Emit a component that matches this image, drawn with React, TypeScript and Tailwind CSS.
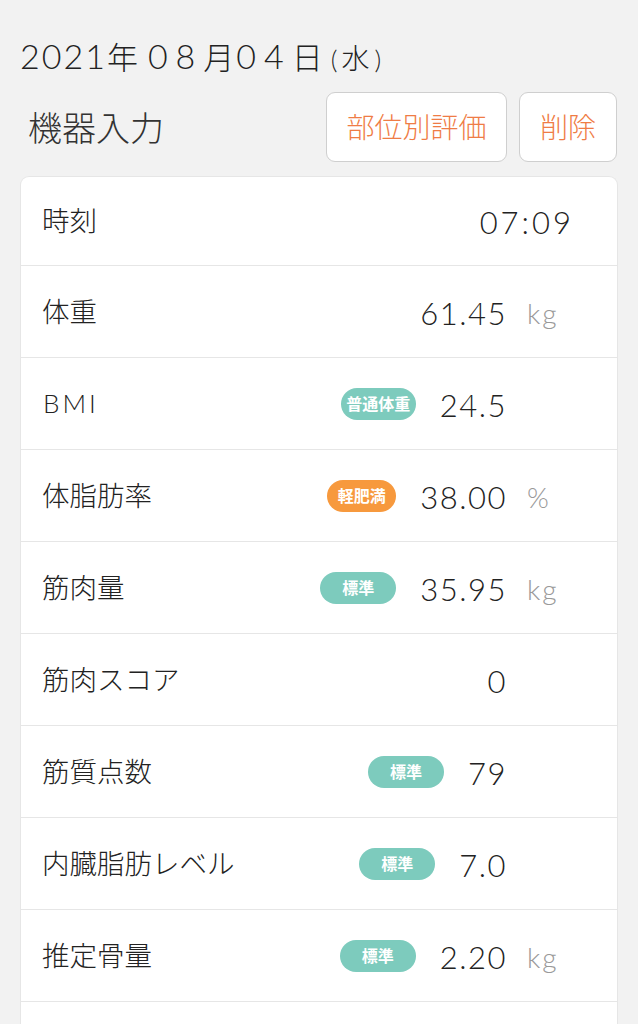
import React from 'react'

type Row = {
  label: string
  value: string
  unit?: string
  badge?: { text: string; color: string; width: string }
  latin?: boolean
}

const rows: Row[] = [
  { label: '体重', value: '61.45', unit: 'kg' },
  { label: 'BMI', value: '24.5', latin: true, badge: { text: '普通体重', color: 'bg-[#7dcbbd]', width: 'w-[75px]' } },
  { label: '体脂肪率', value: '38.00', unit: '%', badge: { text: '軽肥満', color: 'bg-[#f7993d]', width: 'w-[69px]' } },
  { label: '筋肉量', value: '35.95', unit: 'kg', badge: { text: '標準', color: 'bg-[#7dcbbd]', width: 'w-[76px]' } },
  { label: '筋肉スコア', value: '0' },
  { label: '筋質点数', value: '79', badge: { text: '標準', color: 'bg-[#7dcbbd]', width: 'w-[76px]' } },
  { label: '内臓脂肪レベル', value: '7.0', badge: { text: '標準', color: 'bg-[#7dcbbd]', width: 'w-[76px]' } },
  { label: '推定骨量', value: '2.20', unit: 'kg', badge: { text: '標準', color: 'bg-[#7dcbbd]', width: 'w-[76px]' } },
]

function MeasureRow({ row }: { row: Row }) {
  return (
    <div className="flex h-[92px] items-center border-t border-[#e6e6e6]">
      <div
        className={
          row.latin
            ? "pl-[22px] text-[26px] tracking-[3px] text-[#222] font-['Lato',sans-serif] font-light"
            : 'pl-[21px] text-[27.5px] font-light text-[#222]'
        }
      >
        {row.label}
      </div>
      <div className="ml-auto flex items-center">
        {row.badge && (
          <span
            className={`mr-[24px] flex h-[32px] ${row.badge.width} items-center justify-center rounded-full ${row.badge.color} text-[16px] font-bold text-white`}
          >
            {row.badge.text}
          </span>
        )}
        <span className="mt-[3px] text-[31px] font-light tracking-[1.5px] text-[#222]">{row.value}</span>
      </div>
      <div className="mt-[3px] w-[110px] pl-[20px] text-[28px] font-light tracking-[2px] text-[#999]">
        {row.unit}
      </div>
    </div>
  )
}

export default function App() {
  return (
    <div className="min-h-[1024px] bg-[#f2f2f2] font-['Lato','Noto_Sans_CJK_JP',sans-serif] text-[#222]">
      <div className="flex items-baseline pl-[20px] pt-[34px] leading-[44px]">
        <span className="text-[34px] font-light tracking-[2px]">2021</span>
        <span className="text-[31px] font-light">年</span>
        <span className="ml-[10px] text-[34px] font-light tracking-[8px]">08</span>
        <span className="text-[31px] font-light">月</span>
        <span className="ml-[2px] text-[34px] font-light tracking-[8px]">04</span>
        <span className="text-[31px] font-light">日</span>
        <span className="ml-[8px] text-[26px] font-light">(</span>
        <span className="ml-[4px] text-[28px] font-light">水</span>
        <span className="ml-[5px] text-[26px] font-light">)</span>
      </div>

      <div className="mt-[11px] flex items-center pl-[28px] pr-[21px]">
        <div className="text-[34px] font-light text-[#333]">機器入力</div>
        <div className="ml-auto flex gap-[12px]">
          <button className="h-[70px] w-[181px] rounded-[9px] border border-[#cfcfcf] bg-white text-[28px] font-light text-[#ef7c45]">
            部位別評価
          </button>
          <button className="h-[70px] w-[98px] rounded-[9px] border border-[#cfcfcf] bg-white text-[28px] font-light text-[#ef7c45]">
            削除
          </button>
        </div>
      </div>

      <div className="mx-[20px] mt-[14px] overflow-hidden rounded-t-[9px] border border-b-0 border-[#e6e6e6] bg-white">
        <div className="flex h-[88px] items-center">
          <div className="pl-[21px] text-[27.5px] font-light text-[#222]">時刻</div>
          <div className="ml-auto mt-[2px] pr-[43px] text-[31px] font-light tracking-[3px] text-[#222]">07:09</div>
        </div>
        {rows.map((row) => (
          <MeasureRow key={row.label} row={row} />
        ))}
        <div className="h-[60px] border-t border-[#e6e6e6]" />
      </div>
    </div>
  )
}
